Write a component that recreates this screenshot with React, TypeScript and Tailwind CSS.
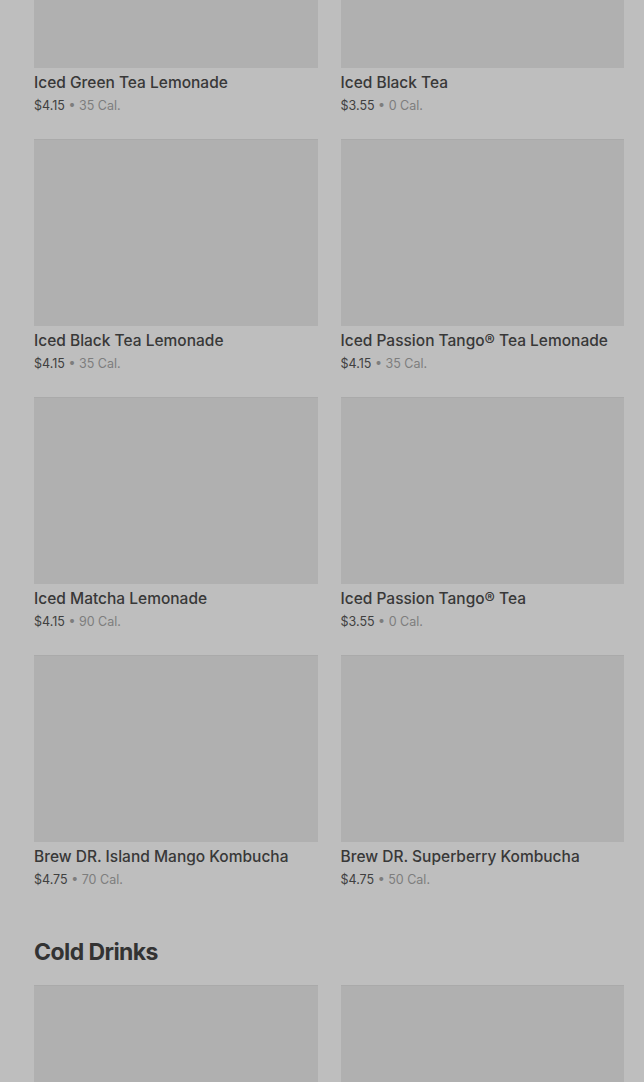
import React from 'react';

interface Item {
  name: string;
  price: string;
  cal: string;
}

const teas: Item[] = [
  { name: 'Iced Green Tea Lemonade', price: '$4.15', cal: '35 Cal.' },
  { name: 'Iced Black Tea', price: '$3.55', cal: '0 Cal.' },
  { name: 'Iced Black Tea Lemonade', price: '$4.15', cal: '35 Cal.' },
  { name: 'Iced Passion Tango® Tea Lemonade', price: '$4.15', cal: '35 Cal.' },
  { name: 'Iced Matcha Lemonade', price: '$4.15', cal: '90 Cal.' },
  { name: 'Iced Passion Tango® Tea', price: '$3.55', cal: '0 Cal.' },
  { name: 'Brew DR. Island Mango Kombucha', price: '$4.75', cal: '70 Cal.' },
  { name: 'Brew DR. Superberry Kombucha', price: '$4.75', cal: '50 Cal.' },
];

const ImagePlaceholder = () => (
  <div className="h-[187px] w-full bg-[#b0b0b0] border-t border-[#aaaaaa]" />
);

const ProductCard: React.FC<{ item: Item }> = ({ item }) => (
  <div className="flex flex-col">
    <ImagePlaceholder />
    <div className="mt-[5px] text-[15.5px] leading-[20px] font-medium text-[#383838] whitespace-nowrap">
      {item.name}
    </div>
    <div className="mt-[4px] text-[12.5px] leading-[18px] text-[#404040]">
      {item.price}
      <span className="text-[#7d7d7d]"> • {item.cal}</span>
    </div>
  </div>
);

export default function App() {
  return (
    <div
      className="h-[1082px] w-full overflow-hidden bg-[#bebebe]"
      style={{ fontFamily: 'Inter, "Noto Sans", sans-serif' }}
    >
      {/* page is scrolled: first row image starts above the viewport */}
      <div className="-mt-[119px] pl-[34px] pr-[20px]">
        <div className="grid grid-cols-2 gap-x-[23px] gap-y-[24px]">
          {teas.map((item) => (
            <ProductCard key={item.name} item={item} />
          ))}
        </div>

        <h2 className="mt-[47px] mb-[17px] text-[23px] leading-[32px] font-bold tracking-tight text-[#333333]">
          Cold Drinks
        </h2>

        {/* next row, only the images reach into the viewport */}
        <div className="grid grid-cols-2 gap-x-[23px]">
          <ImagePlaceholder />
          <ImagePlaceholder />
        </div>
      </div>
    </div>
  );
}
